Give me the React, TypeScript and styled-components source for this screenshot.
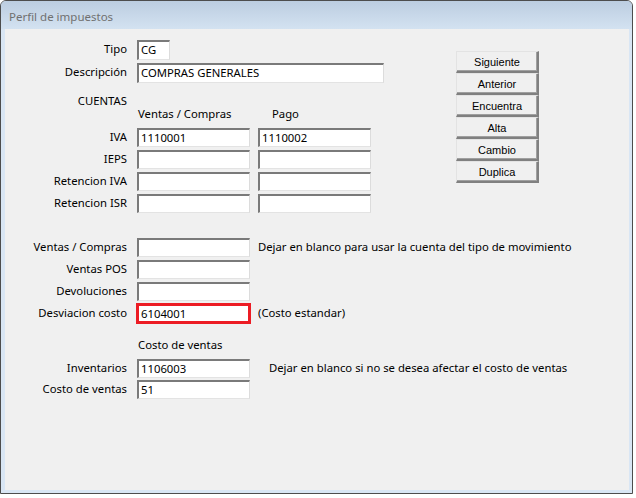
import React from "react";
import styled, { createGlobalStyle } from "styled-components";

const Global = createGlobalStyle`
  html, body { margin: 0; padding: 0; background: #ffffff; }
  body { font-family: "Noto Sans", "Open Sans", sans-serif; }
`;

const Window = styled.div`
  box-sizing: border-box;
  width: 633px;
  height: 494px;
  border: 1px solid #4d4d4d;
  border-radius: 6px 6px 0 0;
  background: #d9e6f4;
  padding: 0 3px 3px 4px;
  display: flex;
  flex-direction: column;
`;

const TitleBar = styled.div`
  height: 28px;
  margin: 0 -3px 0 -4px;
  padding-left: 8px;
  border-radius: 5px 5px 0 0;
  background: linear-gradient(#bccde0, #d3e2f1);
  display: flex;
  align-items: center;
`;

const Title = styled.span`
  font-family: "Noto Sans", "Open Sans", sans-serif;
  font-size: 11.5px;
  color: #707070;
  margin-top: 2px;
`;

const Client = styled.div`
  flex: 1;
  background: #f0f0f0;
  padding-top: 11px;
  display: flex;
  flex-direction: column;
  font-family: "Noto Sans", "Open Sans", sans-serif;
  font-size: 11.3px;
  color: #000;
`;

const TopArea = styled.div`
  display: flex;
`;

const FormCol = styled.div`
  width: 451px;
  display: flex;
  flex-direction: column;
`;

const Row = styled.div<{ $mt?: number }>`
  display: flex;
  align-items: center;
  gap: 8px;
  margin-top: ${(p) => p.$mt ?? 3}px;
`;

const Label = styled.div`
  box-sizing: border-box;
  width: 124px;
  padding-right: 2px;
  text-align: right;
  line-height: 16px;
  margin-top: -2px;
  white-space: nowrap;
`;

const Field = styled.div<{ $w: number; $h?: number; $flag?: boolean }>`
  box-sizing: border-box;
  width: ${(p) => p.$w}px;
  height: ${(p) => p.$h ?? 19}px;
  background: #ffffff;
  border-style: solid;
  border-width: 2px 1px 1px 2px;
  border-color: #7a7a7a #dcdcdc #e3e3e3 #7a7a7a;
  padding: 0 0 0 2px;
  line-height: 16px;
  white-space: nowrap;
  overflow: hidden;
  ${(p) => (p.$flag ? "outline: 3px solid #ec1c24; outline-offset: -2px;" : "")}
`;

const Hint = styled.span<{ $ml: number }>`
  margin-left: ${(p) => p.$ml}px;
  line-height: 16px;
  margin-top: -1px;
  white-space: nowrap;
`;

const SectionHead = styled.div<{ $mt: number }>`
  box-sizing: border-box;
  width: 124px;
  padding-right: 2px;
  text-align: right;
  line-height: 16px;
  margin-top: ${(p) => p.$mt}px;
`;

const ColHeads = styled.div<{ $mt: number }>`
  display: flex;
  margin-top: ${(p) => p.$mt}px;
  padding-left: 133px;
  line-height: 16px;
`;

const ColHead = styled.span<{ $w?: number }>`
  width: ${(p) => (p.$w ? `${p.$w}px` : "auto")};
`;

const ButtonStack = styled.div`
  margin-top: 11px;
  display: flex;
  flex-direction: column;
  width: 83px;
`;

const Button = styled.button`
  box-sizing: border-box;
  height: 22px;
  width: 83px;
  margin: 0;
  padding: 0;
  background: #f0f0f0;
  border-style: solid;
  border-width: 1px 2px 2px 1px;
  border-color: #e3e3e3 #808080 #808080 #e3e3e3;
  box-shadow: inset -1px -1px 0 #a0a0a0;
  font-family: "Liberation Sans", Arial, sans-serif;
  font-size: 11px;
  font-weight: 400;
  color: #000;
  line-height: 18px;
`;

const Block = styled.div<{ $mt: number }>`
  display: flex;
  flex-direction: column;
  margin-top: ${(p) => p.$mt}px;
`;

const CostHead = styled.div<{ $mt: number }>`
  margin-top: ${(p) => p.$mt}px;
  padding-left: 133px;
  line-height: 16px;
`;

const accountRows = [
  { label: "IVA", a: "1110001", b: "1110002" },
  { label: "IEPS", a: "", b: "" },
  { label: "Retencion IVA", a: "", b: "" },
  { label: "Retencion ISR", a: "", b: "" },
];

const buttons = ["Siguiente", "Anterior", "Encuentra", "Alta", "Cambio", "Duplica"];

export default function App() {
  return (
    <>
      <Global />
      <Window>
        <TitleBar>
          <Title>Perfil de impuestos</Title>
        </TitleBar>
        <Client>
          <TopArea>
            <FormCol>
              <Row $mt={0}>
                <Label>Tipo</Label>
                <Field $w={33} $h={20}>CG</Field>
              </Row>
              <Row>
                <Label>Descripción</Label>
                <Field $w={247} $h={20}>COMPRAS GENERALES</Field>
              </Row>
              <SectionHead $mt={10}>CUENTAS</SectionHead>
              <ColHeads $mt={-3}>
                <ColHead $w={134}>Ventas / Compras</ColHead>
                <ColHead>Pago</ColHead>
              </ColHeads>
              {accountRows.map((r, i) => (
                <Row key={r.label} $mt={i === 0 ? 6 : 3}>
                  <Label>{r.label}</Label>
                  <Field $w={113}>{r.a}</Field>
                  <Field $w={113}>{r.b}</Field>
                </Row>
              ))}
            </FormCol>
            <ButtonStack>
              {buttons.map((b) => (
                <Button key={b}>{b}</Button>
              ))}
            </ButtonStack>
          </TopArea>
          <Block $mt={25}>
            <Row $mt={0}>
              <Label>Ventas / Compras</Label>
              <Field $w={113} />
              <Hint $ml={0}>Dejar en blanco para usar la cuenta del tipo de movimiento</Hint>
            </Row>
            <Row>
              <Label>Ventas POS</Label>
              <Field $w={113} />
            </Row>
            <Row>
              <Label>Devoluciones</Label>
              <Field $w={113} />
            </Row>
            <Row>
              <Label>Desviacion costo</Label>
              <Field $w={113} $flag>6104001</Field>
              <Hint $ml={0}>(Costo estandar)</Hint>
            </Row>
          </Block>
          <CostHead $mt={14}>Costo de ventas</CostHead>
          <Block $mt={6}>
            <Row $mt={0}>
              <Label>Inventarios</Label>
              <Field $w={113}>1106003</Field>
              <Hint $ml={11}>Dejar en blanco si no se desea afectar el costo de ventas</Hint>
            </Row>
            <Row $mt={2}>
              <Label>Costo de ventas</Label>
              <Field $w={113}>51</Field>
            </Row>
          </Block>
        </Client>
      </Window>
    </>
  );
}
